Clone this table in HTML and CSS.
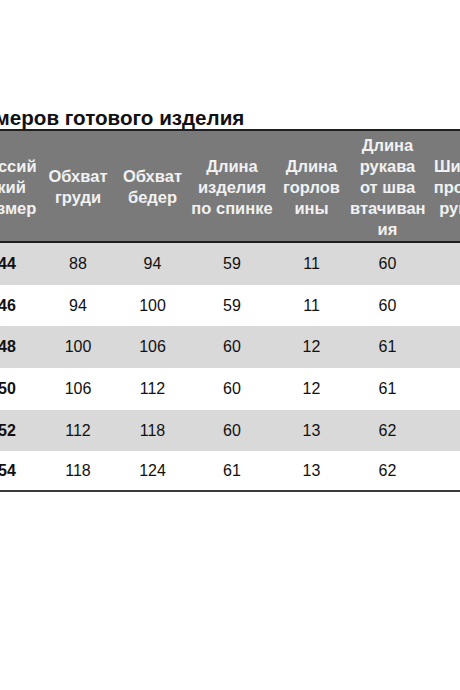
FILE: index.html
```html
<!DOCTYPE html>
<html lang="ru">
<head>
<meta charset="utf-8">
<title>Таблица размеров</title>
<link rel="stylesheet" href="styles.css">
</head>
<body>
<div class="sheet">
  <h1 class="title">Таблица размеров готового изделия</h1>
  <table class="sizes">
    <colgroup>
      <col class="c1"><col class="c2"><col class="c3"><col class="c4"><col class="c5"><col class="c6"><col class="c7">
    </colgroup>
    <thead>
      <tr>
        <th>Россий<br>ский<br>размер</th>
        <th>Обхват<br>груди</th>
        <th>Обхват<br>бедер</th>
        <th>Длина<br>изделия<br>по спинке</th>
        <th>Длина<br>горлов<br>ины</th>
        <th>Длина<br>рукава<br>от шва<br>втачиван<br>ия</th>
        <th>Ширина<br>проймы<br>рукава</th>
      </tr>
    </thead>
    <tbody>
      <tr class="alt"><td class="size">44</td><td>88</td><td>94</td><td>59</td><td>11</td><td>60</td><td></td></tr>
      <tr><td class="size">46</td><td>94</td><td>100</td><td>59</td><td>11</td><td>60</td><td></td></tr>
      <tr class="alt"><td class="size">48</td><td>100</td><td>106</td><td>60</td><td>12</td><td>61</td><td></td></tr>
      <tr><td class="size">50</td><td>106</td><td>112</td><td>60</td><td>12</td><td>61</td><td></td></tr>
      <tr class="alt"><td class="size">52</td><td>112</td><td>118</td><td>60</td><td>13</td><td>62</td><td></td></tr>
      <tr><td class="size">54</td><td>118</td><td>124</td><td>61</td><td>13</td><td>62</td><td></td></tr>
    </tbody>
  </table>
</div>
</body>
</html>
```

FILE: styles.css
```css
html, body {
  margin: 0;
  padding: 0;
  background: #ffffff;
  overflow: hidden;
}

body {
  font-family: "Liberation Sans", Arial, sans-serif;
  color: #111111;
}

.sheet {
  padding-top: 107px;
  margin-left: -28px;
  width: 560px;
}

.title {
  margin: 0 0 0 -103px;
  font-size: 20.6px;
  line-height: 22px;
  font-weight: bold;
  color: #111111;
  white-space: nowrap;
}

.sizes {
  border-collapse: collapse;
  table-layout: fixed;
  width: 537px;
}

.c1 { width: 70px; }
.c2 { width: 72px; }
.c3 { width: 77px; }
.c4 { width: 82px; }
.c5 { width: 77px; }
.c6 { width: 75px; }
.c7 { width: 84px; }

.sizes thead tr {
  height: 112px;
  background: #7a7a7a;
  border-top: 2px solid #1e1e1e;
  border-bottom: 2px solid #1e1e1e;
}

.sizes th {
  padding: 2px 0 0;
  font-size: 16.5px;
  line-height: 21px;
  font-weight: bold;
  color: #f1f1f1;
  text-align: center;
  vertical-align: middle;
  white-space: nowrap;
}

.sizes tbody tr {
  height: 42px;
  background: #ffffff;
}

.sizes tbody tr:nth-child(1) { height: 43px; }
.sizes tbody tr:nth-child(2) { height: 41px; }
.sizes tbody tr:nth-child(5) { height: 41px; }
.sizes tbody tr:nth-child(6) { height: 40px; }

.sizes tbody tr.alt {
  background: #d9d9d9;
}

.sizes tbody tr:last-child {
  border-bottom: 2px solid #3a3a3a;
}

.sizes td {
  padding: 0;
  font-size: 16px;
  line-height: 20px;
  text-align: center;
  vertical-align: middle;
  color: #111111;
}

.sizes td.size {
  font-weight: bold;
}
```
